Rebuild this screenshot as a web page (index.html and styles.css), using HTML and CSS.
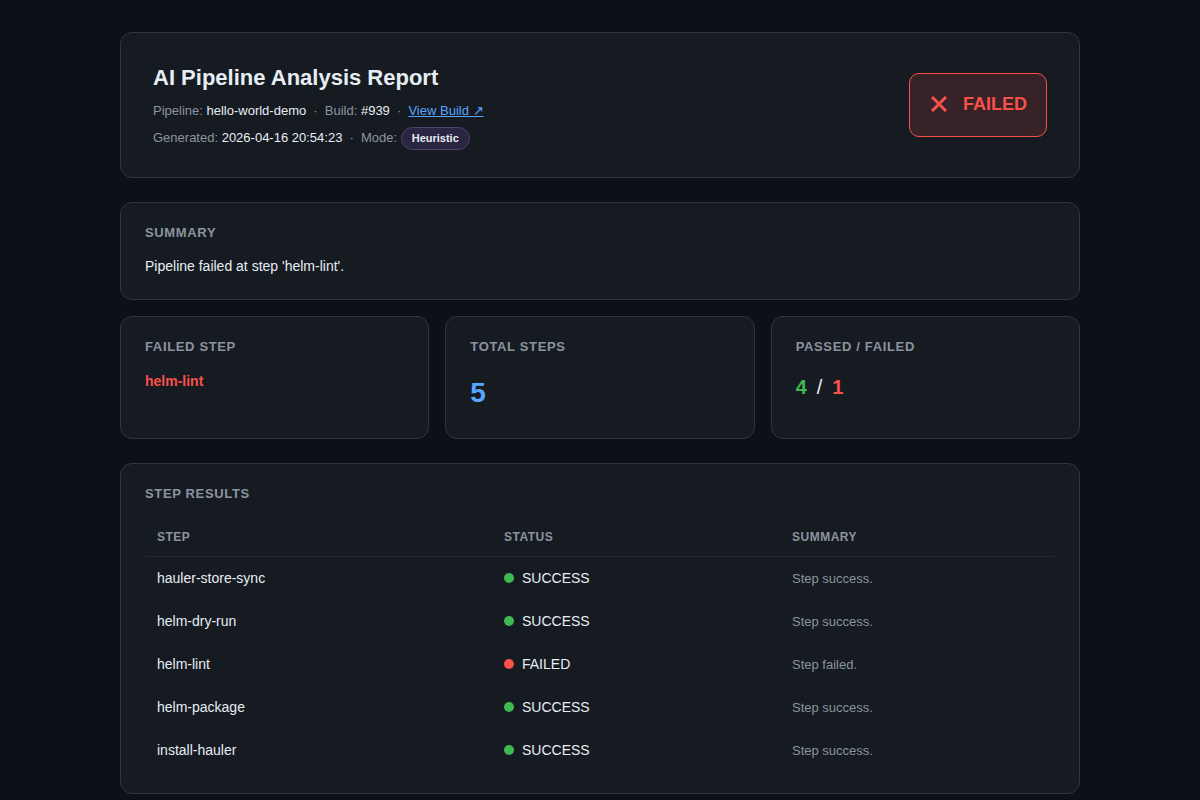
FILE: index.html
```html
<!DOCTYPE html>
<html lang="en">
<head>
<meta charset="UTF-8">
<meta name="viewport" content="width=device-width, initial-scale=1.0">
<title>AI Pipeline Analysis Report</title>
<link rel="stylesheet" href="styles.css">
</head>
<body>

<div id="report">
    <div class="card header">
        <div class="header-info">
            <h1>AI Pipeline Analysis Report</h1>
            <div class="meta">
                <span class="muted">Pipeline:</span> hello-world-demo
                <span class="sep">·</span>
                <span class="muted">Build:</span> #939
                <span class="sep">·</span>
                <a href="#">View Build ↗</a>
            </div>
            <div class="meta meta-mode">
                <span class="muted">Generated:</span> 2026-04-16 20:54:23
                <span class="sep">·</span>
                <span class="muted">Mode:</span>
                <span class="mode-badge">Heuristic</span>
            </div>
        </div>
        <div class="status-badge">
            <svg width="16" height="16" viewBox="0 0 16 16"><path d="M2 2 L14 14 M14 2 L2 14" stroke="#f85149" stroke-width="3" stroke-linecap="square"/></svg>
            <span>FAILED</span>
        </div>
    </div>

    <div class="card summary">
        <div class="label">Summary</div>
        <p>Pipeline failed at step 'helm-lint'.</p>
    </div>

    <div class="stats">
        <div class="card stat">
            <div class="label">Failed Step</div>
            <div class="stat-step">helm-lint</div>
        </div>
        <div class="card stat">
            <div class="label">Total Steps</div>
            <div class="stat-total">5</div>
        </div>
        <div class="card stat">
            <div class="label">Passed / Failed</div>
            <div class="stat-ratio"><span class="green">4</span><span class="slash">/</span><span class="red">1</span></div>
        </div>
    </div>

    <div class="card steps">
        <div class="label">Step Results</div>
        <table>
            <thead>
                <tr>
                    <th class="col-step">Step</th>
                    <th class="col-status">Status</th>
                    <th>Summary</th>
                </tr>
            </thead>
            <tbody id="step-rows"></tbody>
        </table>
    </div>
</div>

<script>
    const steps = [
        { name: 'hauler-store-sync', status: 'SUCCESS', summary: 'Step success.' },
        { name: 'helm-dry-run', status: 'SUCCESS', summary: 'Step success.' },
        { name: 'helm-lint', status: 'FAILED', summary: 'Step failed.' },
        { name: 'helm-package', status: 'SUCCESS', summary: 'Step success.' },
        { name: 'install-hauler', status: 'SUCCESS', summary: 'Step success.' }
    ];

    let rows = '';
    steps.forEach(function (step) {
        const cls = step.status === 'SUCCESS' ? 'ok' : 'fail';
        rows += `<tr>
            <td>${step.name}</td>
            <td><span class="dot ${cls}"></span>${step.status}</td>
            <td class="step-summary">${step.summary}</td>
        </tr>`;
    });
    document.getElementById('step-rows').innerHTML = rows;
</script>

</body>
</html>
```

FILE: styles.css
```css
body {
    font-family: "Liberation Sans", Arial, sans-serif;
    margin: 0;
    padding: 0;
    background-color: #0d1117;
    color: #e6edf3;
}
#report {
    width: 960px;
    margin: 0 auto;
    padding: 32px 0;
}
.card {
    background-color: #161b22;
    border: 1px solid #30363d;
    border-radius: 12px;
    padding: 24px;
}
.header {
    display: flex;
    justify-content: space-between;
    align-items: center;
    padding: 32px 32px 27px 32px;
    margin-bottom: 24px;
}
h1 {
    font-size: 22px;
    margin: 0 0 12px 0;
}
.meta {
    font-size: 13px;
}
.meta-mode {
    margin-top: 8px;
    line-height: 23px;
}
.muted {
    color: #8b949e;
}
.sep {
    color: #8b949e;
    margin: 0 3.5px;
}
.meta a {
    color: #58a6ff;
}
.mode-badge {
    display: inline-block;
    font-size: 11px;
    font-weight: bold;
    line-height: 15px;
    padding: 3px 10px;
    border-radius: 12px;
    background-color: #2a2540;
    border: 1px solid #4d4170;
    vertical-align: middle;
}
.status-badge {
    display: flex;
    align-items: center;
    gap: 16px;
    padding: 20px 19px 21px 21px;
    margin-bottom: 6px;
    border: 1px solid #f85149;
    border-radius: 10px;
    background-color: rgba(248, 81, 73, 0.15);
    color: #f85149;
    font-size: 18px;
    font-weight: bold;
}
.label {
    font-size: 13px;
    line-height: 11px;
    font-weight: bold;
    text-transform: uppercase;
    letter-spacing: 0.65px;
    color: #8b949e;
}
.summary {
    padding-bottom: 25px;
    margin-bottom: 16px;
}
.summary p {
    font-size: 14px;
    margin: 20px 0 0 0;
}
.stats {
    display: grid;
    grid-template-columns: 1fr 1fr 1fr;
    gap: 16px;
    margin-bottom: 24px;
}
.stat .label {
    margin-bottom: 20px;
}
.stat-step {
    font-size: 14px;
    line-height: 18px;
    font-weight: bold;
    color: #f85149;
}
.stat-total {
    font-size: 28px;
    line-height: 42px;
    font-weight: bold;
    color: #58a6ff;
}
.stat-ratio {
    font-size: 20px;
    line-height: 30px;
    font-weight: bold;
}
.green {
    color: #3fb950;
}
.red {
    color: #f85149;
}
.slash {
    font-weight: normal;
    margin: 0 10px;
}
.steps {
    padding-bottom: 21px;
}
.steps .label {
    margin-bottom: 19px;
}
table {
    width: 100%;
    border-collapse: collapse;
}
th {
    text-align: left;
    font-size: 12px;
    font-weight: bold;
    text-transform: uppercase;
    letter-spacing: 0.5px;
    color: #8b949e;
    padding: 12px;
    border-bottom: 1px solid #21262d;
}
.col-step {
    width: 323px;
}
.col-status {
    width: 264px;
}
td {
    font-size: 14px;
    line-height: 21px;
    padding: 11px 12px;
}
.step-summary {
    font-size: 13px;
    color: #8b949e;
}
.dot {
    display: inline-block;
    width: 10px;
    height: 10px;
    border-radius: 50%;
    margin-right: 8px;
}
.dot.ok {
    background-color: #3fb950;
}
.dot.fail {
    background-color: #f85149;
}
```
